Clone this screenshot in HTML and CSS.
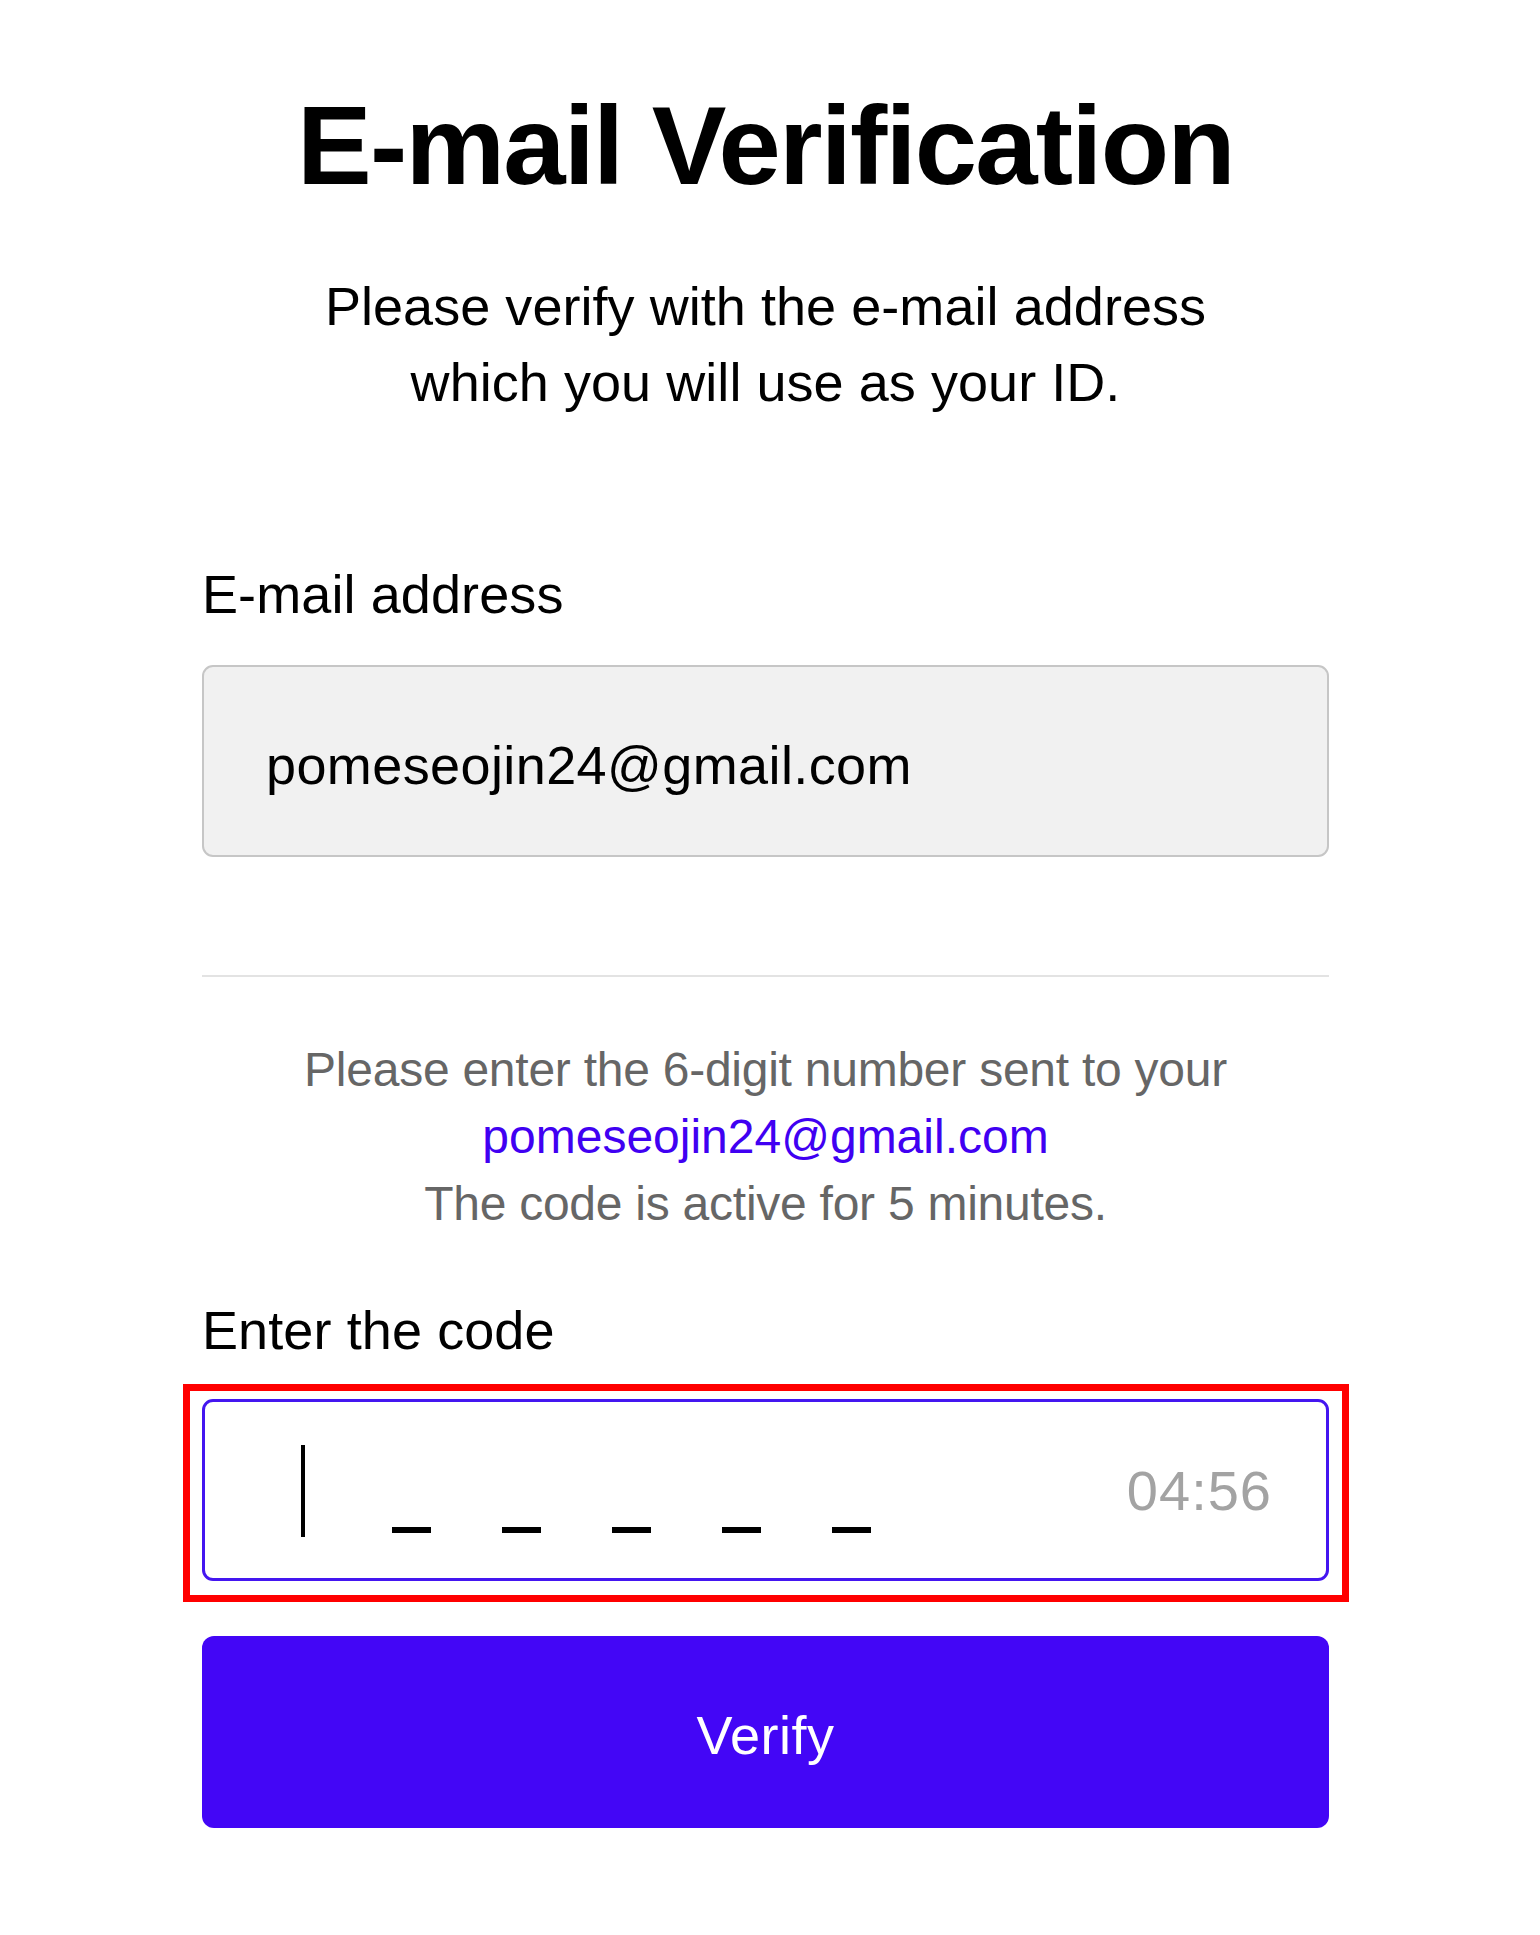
FILE: index.html
```html
<!DOCTYPE html>
<html lang="en">
<head>
<meta charset="utf-8">
<title>E-mail Verification</title>
<link rel="stylesheet" href="styles.css">
</head>
<body>
<main class="page">
  <h1 class="title">E-mail Verification</h1>
  <p class="subtitle">Please verify with the e-mail address<br>which you will use as your ID.</p>

  <label class="label label-email">E-mail address</label>
  <div class="email-box">pomeseojin24@gmail.com</div>

  <hr class="divider">

  <p class="info">Please enter the 6-digit number sent to your<br><span class="info-mail">pomeseojin24@gmail.com</span><br>The code is active for 5 minutes.</p>

  <label class="label label-code">Enter the code</label>
  <div class="code-box">
    <span class="caret"></span>
    <span class="dashes">
      <span class="dash"></span>
      <span class="dash"></span>
      <span class="dash"></span>
      <span class="dash"></span>
      <span class="dash"></span>
    </span>
    <span class="timer">04:56</span>
  </div>

  <button class="verify" type="button">Verify</button>
</main>
</body>
</html>
```

FILE: styles.css
```css
* {
  box-sizing: border-box;
}

html, body {
  margin: 0;
  padding: 0;
  background: #ffffff;
}

body {
  font-family: "Liberation Sans", Arial, sans-serif;
  color: #000000;
  min-height: 1935px;
}

.page {
  width: 1127px;
  margin: 0 0 0 202px;
  padding-top: 81px;
  display: flex;
  flex-direction: column;
}

.title {
  margin: 0;
  font-size: 112px;
  line-height: 130px;
  font-weight: 700;
  letter-spacing: -1.8px;
  text-align: center;
}

.subtitle {
  margin: 57px 0 0;
  font-size: 54px;
  line-height: 76px;
  letter-spacing: 0.05px;
  text-align: center;
}

.label {
  display: block;
  font-size: 54px;
  line-height: 66px;
  letter-spacing: 0.1px;
}

.label-email {
  margin-top: 141px;
}

.email-box {
  margin-top: 38px;
  height: 192px;
  border: 2px solid #c6c6c6;
  border-radius: 11px;
  background: #f1f1f1;
  display: flex;
  align-items: center;
  padding: 8px 60px 0 62px;
  font-size: 54px;
  letter-spacing: 0.4px;
}

.divider {
  margin: 118px 0 0;
  border: none;
  height: 2px;
  background: #e3e3e3;
}

.info {
  margin: 59px 0 0;
  font-size: 48px;
  line-height: 67px;
  letter-spacing: -0.25px;
  color: #666666;
  text-align: center;
}

.info-mail {
  color: #4000f2;
  letter-spacing: 0;
}

.label-code {
  margin-top: 60px;
}

.code-box {
  position: relative;
  margin-top: 36px;
  height: 182px;
  border: 3px solid #4416f0;
  border-radius: 11px;
  background: #ffffff;
  display: flex;
  align-items: flex-start;
  padding: 0 54px 0 96px;
}

.code-box::after {
  content: "";
  position: absolute;
  top: -18px;
  left: -22px;
  right: -23px;
  bottom: -24px;
  border: 7px solid #ff0000;
  pointer-events: none;
}

.caret {
  display: block;
  width: 4px;
  height: 92px;
  margin-top: 43px;
  background: #000000;
}

.dashes {
  display: flex;
  gap: 71px;
  margin-left: 87px;
  margin-top: 125px;
}

.dash {
  display: block;
  width: 39px;
  height: 6px;
  background: #000000;
}

.timer {
  margin-left: auto;
  margin-top: 61px;
  font-size: 56px;
  line-height: 56px;
  letter-spacing: 1px;
  color: #a3a3a3;
}

.verify {
  margin-top: 55px;
  height: 192px;
  width: 100%;
  border: none;
  border-radius: 12px;
  background: #4306f6;
  color: #ffffff;
  font-family: "Liberation Sans", Arial, sans-serif;
  font-size: 54px;
  letter-spacing: 0.5px;
  padding: 6px 0 0;
  cursor: pointer;
}
```
